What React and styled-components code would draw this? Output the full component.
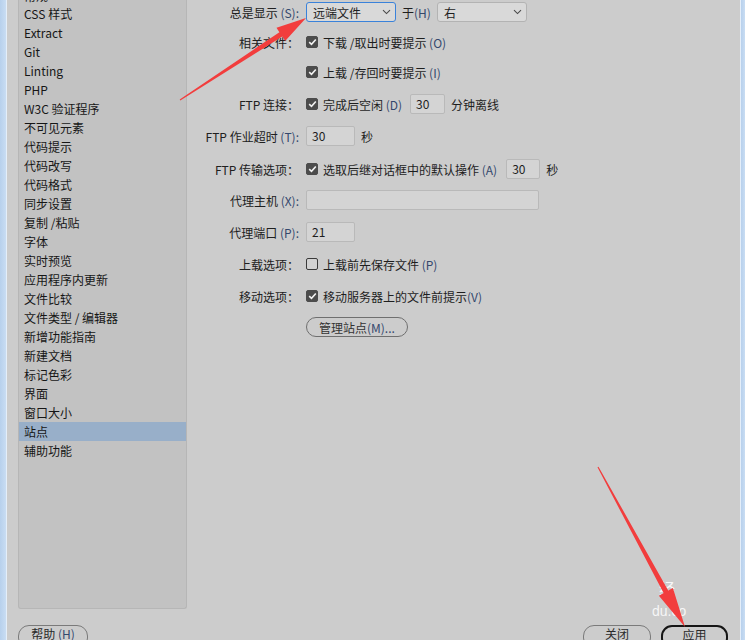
import styled, { createGlobalStyle } from "styled-components";

const GlobalStyle = createGlobalStyle`
  body {
    margin: 0;
    background-color: #cccccc;
    font-family: "Noto Sans CJK SC", "Noto Sans", sans-serif;
    font-size: 12px;
    color: #1e1e1e;
  }
`;

const Frame = styled.div`
  position: relative;
  display: flex;
  width: 745px;
  height: 640px;
  overflow: hidden;
  background-color: #cccccc;
`;

const Edge = styled.div`
  width: ${(props) => props.$w}px;
  flex-shrink: 0;
  background: linear-gradient(to right, #b7d0ec, #c9ddf3);
  border-${(props) => props.$side}: 1px solid #e4eef9;
`;

const Main = styled.div`
  flex: 1;
  display: flex;
  flex-direction: column;
  padding: 0 12px 0 11px;
`;

const TopArea = styled.div`
  display: flex;
  height: 609px;
  flex-shrink: 0;
`;

const Sidebar = styled.div`
  width: 167px;
  background-color: #c2c2c2;
  border: 1px solid #b6b6b6;
  border-top: none;
  border-radius: 0 0 3px 3px;
  overflow: hidden;
`;

const List = styled.ul`
  list-style: none;
  margin: -15px 0 0 0;
  padding: 0;
`;

const Item = styled.li`
  height: 19px;
  line-height: 19px;
  padding-left: 5px;
  white-space: nowrap;
  color: #161616;
  background-color: ${(props) => (props.$active ? "#98afc9" : "transparent")};
  &:first-child {
    line-height: 21px;
  }
`;

const Form = styled.div`
  flex: 1;
  display: flex;
  flex-direction: column;
  padding-top: 2px;
  padding-left: 1px;
`;

const Row = styled.div`
  display: grid;
  grid-template-columns: 111px 1fr;
  column-gap: 7px;
  align-items: center;
  height: ${(props) => props.$h || 20}px;
  margin-top: ${(props) => props.$gap || 0}px;
`;

const Label = styled.div`
  text-align: right;
  white-space: nowrap;
  color: #202020;
`;

const Controls = styled.div`
  display: flex;
  align-items: center;
  gap: ${(props) => props.$gap ?? 6}px;
  white-space: nowrap;
`;

const Mn = styled.span`
  color: #34486c;
`;

const Select = styled.div`
  box-sizing: border-box;
  width: 90px;
  height: 20px;
  display: flex;
  align-items: center;
  justify-content: space-between;
  padding: 0 4px 0 6px;
  background-color: #d9d9d9;
  border: 1px solid ${(props) => (props.$focus ? "#3a82da" : "#b3b3b3")};
  border-radius: 3px;
`;

const Input = styled.div`
  box-sizing: border-box;
  width: ${(props) => props.$w}px;
  height: 20px;
  line-height: 18px;
  padding-left: 5px;
  background-color: #d4d4d4;
  border: 1px solid #b9b9b9;
  border-radius: 2px;
`;

const CheckRow = styled.label`
  display: flex;
  align-items: center;
  gap: 5px;
`;

const Box = styled.span`
  box-sizing: border-box;
  width: 12px;
  height: 12px;
  display: inline-flex;
  align-items: center;
  justify-content: center;
  border-radius: 2px;
  background-color: ${(props) => (props.$checked ? "#4c4c4c" : "#d2d2d2")};
  border: 1px solid ${(props) => (props.$checked ? "#4c4c4c" : "#3a3a3a")};
`;

const PillButton = styled.div`
  box-sizing: border-box;
  height: 20px;
  padding: 0 12px;
  display: inline-flex;
  align-items: center;
  border: 1px solid #6f6f6f;
  border-radius: 10px;
  color: #333;
`;

const Footer = styled.div`
  display: flex;
  align-items: flex-start;
  padding-top: 16px;
`;

const FootButton = styled.div`
  box-sizing: border-box;
  width: ${(props) => props.$w}px;
  height: 24px;
  line-height: 15px;
  text-align: center;
  border: ${(props) => (props.$primary ? "2px solid #151515" : "1px solid #7a7a7a")};
  border-radius: 11px;
  color: #2a2a2a;
  margin-left: ${(props) => props.$ml || 0}px;
`;

const Spacer = styled.div`
  flex: 1;
`;

const Overlay = styled.svg`
  position: absolute;
  left: 0;
  top: 0;
  pointer-events: none;
`;

const Watermark = styled.div`
  position: absolute;
  left: ${(props) => props.$x}px;
  top: ${(props) => props.$y}px;
  font-size: ${(props) => props.$size}px;
  color: rgba(255, 255, 255, 0.85);
  font-family: "Liberation Sans", "Noto Sans CJK SC", sans-serif;
`;

const categories = [
  "常规",
  "CSS 样式",
  "Extract",
  "Git",
  "Linting",
  "PHP",
  "W3C 验证程序",
  "不可见元素",
  "代码提示",
  "代码改写",
  "代码格式",
  "同步设置",
  "复制 /粘贴",
  "字体",
  "实时预览",
  "应用程序内更新",
  "文件比较",
  "文件类型 / 编辑器",
  "新增功能指南",
  "新建文档",
  "标记色彩",
  "界面",
  "窗口大小",
  "站点",
  "辅助功能",
];

function Chevron() {
  return (
    <svg width="9" height="6" viewBox="0 0 9 6">
      <path d="M1 1.2 L4.5 4.6 L8 1.2" fill="none" stroke="#4a4a4a" strokeWidth="1.1" />
    </svg>
  );
}

function Check({ checked, children }) {
  return (
    <CheckRow>
      <Box $checked={checked}>
        {checked && (
          <svg width="9" height="8" viewBox="0 0 9 8">
            <path d="M1.2 4.2 L3.5 6.4 L7.8 1.5" fill="none" stroke="#f2f2f2" strokeWidth="1.6" />
          </svg>
        )}
      </Box>
      <span>{children}</span>
    </CheckRow>
  );
}

function Arrow({ from, to, head, half }) {
  const dx = to[0] - from[0];
  const dy = to[1] - from[1];
  const len = Math.hypot(dx, dy);
  const ux = dx / len;
  const uy = dy / len;
  const nx = -uy;
  const ny = ux;
  const bx = to[0] - ux * head;
  const by = to[1] - uy * head;
  const p = (x, y) => `${x.toFixed(1)},${y.toFixed(1)}`;
  const pts = [
    p(from[0] + nx * 0.6, from[1] + ny * 0.6),
    p(bx + nx * 2.6, by + ny * 2.6),
    p(bx + nx * half, by + ny * half),
    p(to[0], to[1]),
    p(bx - nx * half, by - ny * half),
    p(bx - nx * 2.6, by - ny * 2.6),
    p(from[0] - nx * 0.6, from[1] - ny * 0.6),
  ].join(" ");
  return <polygon points={pts} fill="#f23d3d" />;
}

export default function App() {
  return (
    <>
      <GlobalStyle />
      <Frame>
        <Edge $w={6} $side="right" />
        <Main>
          <TopArea>
            <Sidebar>
              <List>
                {categories.map((name) => (
                  <Item key={name} $active={name === "站点"}>
                    {name}
                  </Item>
                ))}
              </List>
            </Sidebar>
            <Form>
              <Row>
                <Label>
                  总是显示 <Mn>(S):</Mn>
                </Label>
                <Controls>
                  <Select $focus>
                    <span>远端文件</span>
                    <Chevron />
                  </Select>
                  <span>
                    于<Mn>(H)</Mn>
                  </span>
                  <Select>
                    <span>右</span>
                    <Chevron />
                  </Select>
                </Controls>
              </Row>
              <Row $gap={10}>
                <Label>相关文件：</Label>
                <Controls>
                  <Check checked>
                    下载 /取出时要提示 <Mn>(O)</Mn>
                  </Check>
                </Controls>
              </Row>
              <Row $gap={10}>
                <Label />
                <Controls>
                  <Check checked>
                    上载 /存回时要提示 <Mn>(I)</Mn>
                  </Check>
                </Controls>
              </Row>
              <Row $gap={12}>
                <Label>FTP 连接：</Label>
                <Controls>
                  <Check checked>
                    完成后空闲 <Mn>(D)</Mn>
                  </Check>
                  <Input $w={35} style={{ marginLeft: 2 }}>30</Input>
                  <span>分钟离线</span>
                </Controls>
              </Row>
              <Row $gap={12}>
                <Label>
                  FTP 作业超时 <Mn>(T):</Mn>
                </Label>
                <Controls>
                  <Input $w={49}>30</Input>
                  <span>秒</span>
                </Controls>
              </Row>
              <Row $gap={13}>
                <Label>FTP 传输选项：</Label>
                <Controls>
                  <Check checked>
                    选取后继对话框中的默认操作 <Mn>(A)</Mn>
                  </Check>
                  <Input $w={34} style={{ marginLeft: 3 }}>30</Input>
                  <span>秒</span>
                </Controls>
              </Row>
              <Row $gap={11}>
                <Label>
                  代理主机 <Mn>(X):</Mn>
                </Label>
                <Controls>
                  <Input $w={233} />
                </Controls>
              </Row>
              <Row $gap={12}>
                <Label>
                  代理端口 <Mn>(P):</Mn>
                </Label>
                <Controls>
                  <Input $w={49}>21</Input>
                </Controls>
              </Row>
              <Row $gap={12}>
                <Label>上载选项：</Label>
                <Controls>
                  <Check>
                    上载前先保存文件 <Mn>(P)</Mn>
                  </Check>
                </Controls>
              </Row>
              <Row $gap={12}>
                <Label>移动选项：</Label>
                <Controls>
                  <Check checked>
                    移动服务器上的文件前提示<Mn>(V)</Mn>
                  </Check>
                </Controls>
              </Row>
              <Row $gap={11} $h={19}>
                <Label />
                <Controls>
                  <PillButton>
                    管理站点 <Mn>(M)...</Mn>
                  </PillButton>
                </Controls>
              </Row>
            </Form>
          </TopArea>
          <Footer>
            <FootButton $w={70}>
              帮助 <Mn>(H)</Mn>
            </FootButton>
            <Spacer />
            <FootButton $w={68}>关闭</FootButton>
            <FootButton $w={67} $ml={10} $primary>
              应用
            </FootButton>
          </Footer>
        </Main>
        <Edge $w={4} $side="left" />
        <Watermark $x={659} $y={576} $size={16}>
          经
        </Watermark>
        <Watermark $x={652} $y={603} $size={14}>
          du.co
        </Watermark>
        <Overlay width="745" height="640" viewBox="0 0 745 640">
          <Arrow from={[180, 100]} to={[306, 18]} head={30} half={8} />
          <Arrow from={[598, 467]} to={[685, 627]} head={40} half={8} />
        </Overlay>
      </Frame>
    </>
  );
}
